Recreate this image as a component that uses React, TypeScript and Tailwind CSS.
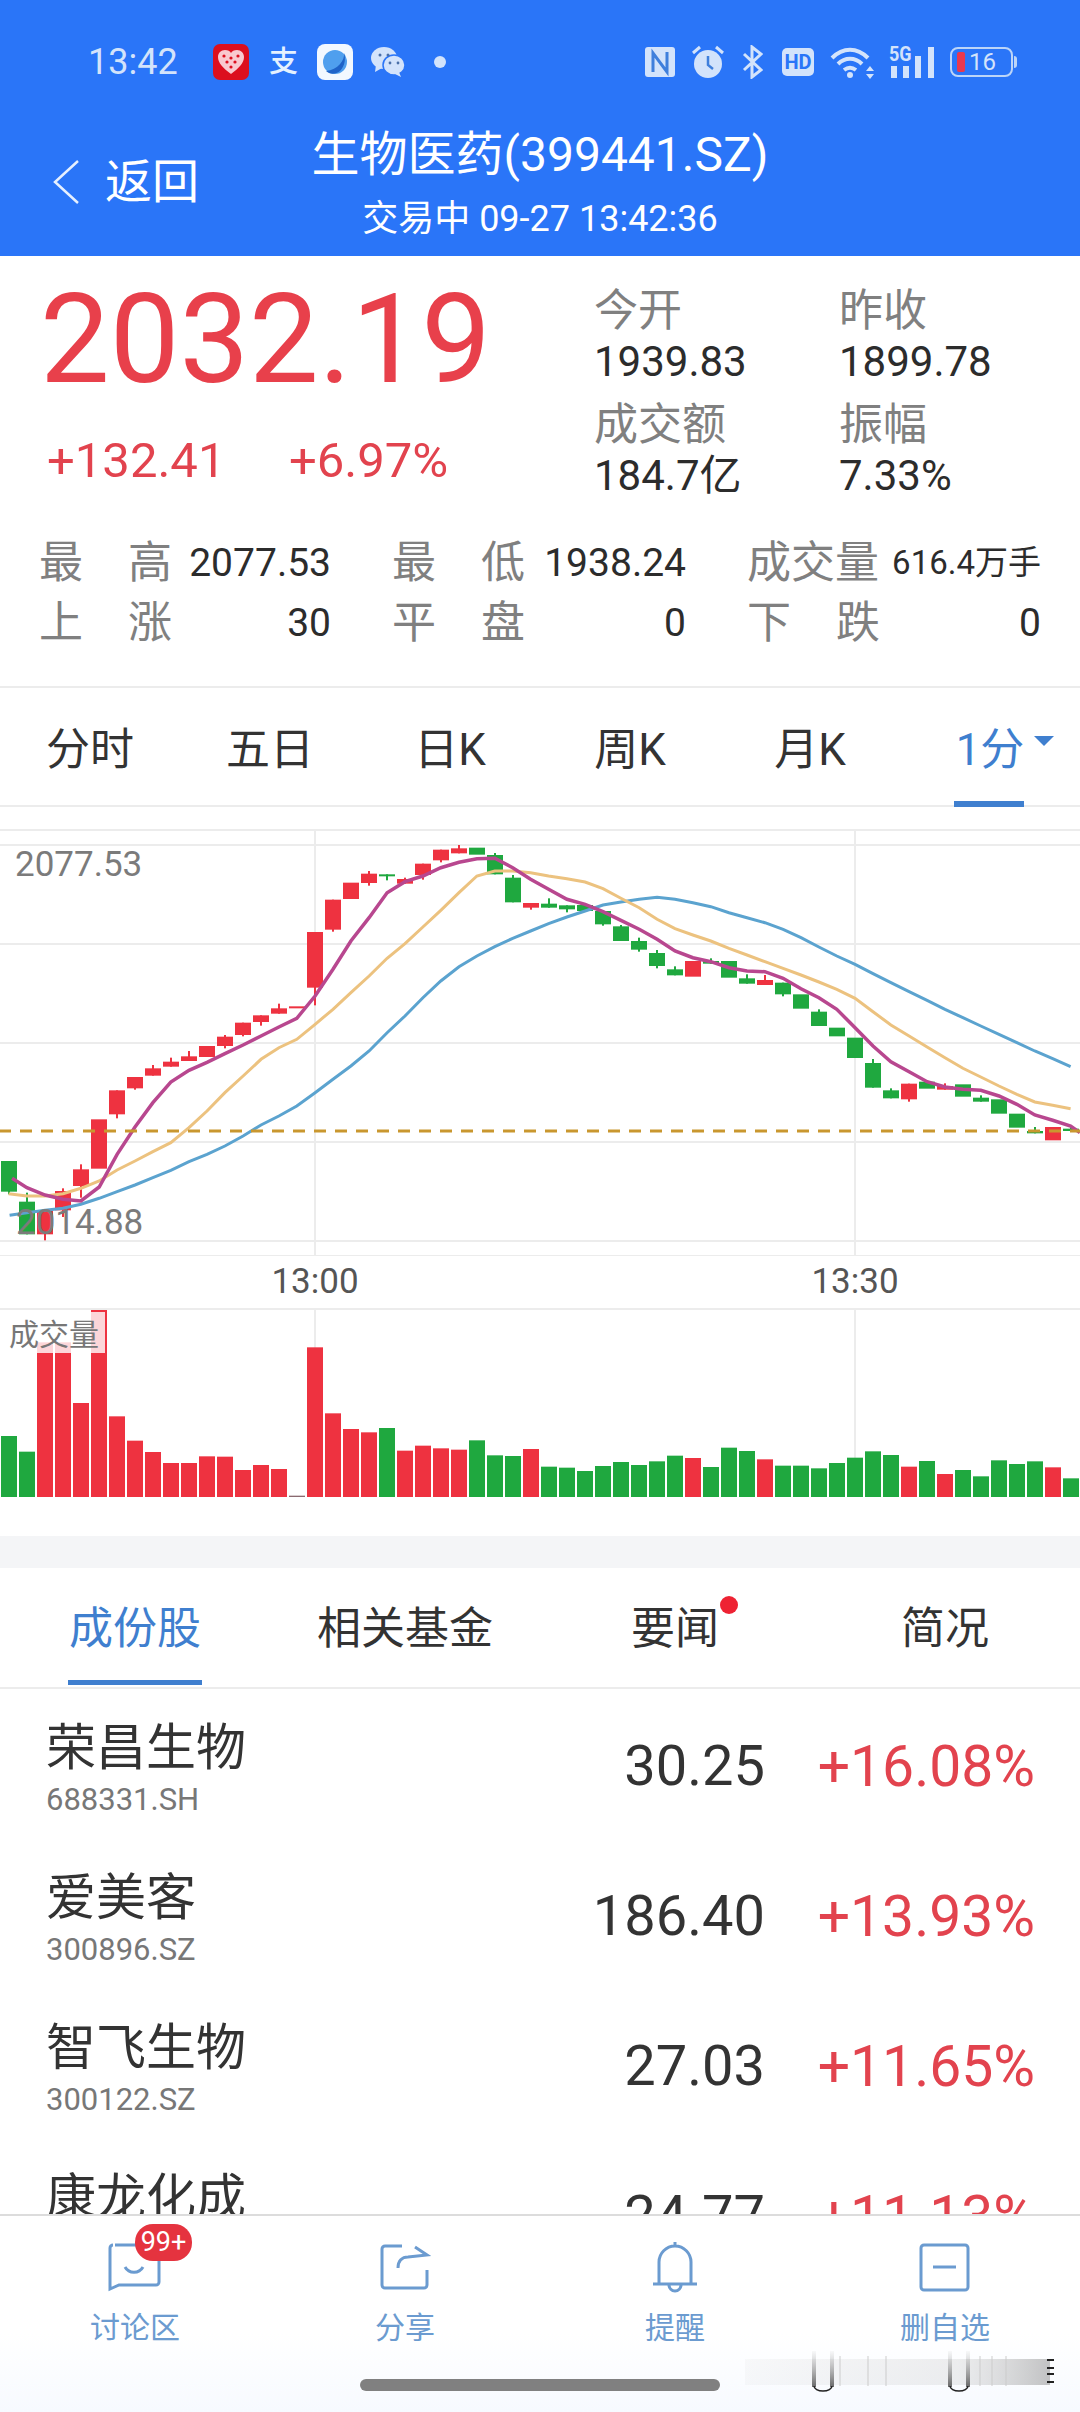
import React from 'react';

const FONT = { fontFamily: 'Roboto, "Noto Sans CJK SC", sans-serif' };

const R = '#ee3240';
const G = '#1fa83f';

// [color, bodyTop, bodyBottom, wickTop, wickBottom] in the chart's 3x grid units
const candles: [string, number, number, number?, number?][] = [
  [G, 1020, 1112, 1020, 1120], [G, 1142, 1240, 1115, 1240], [R, 1170, 1240, 1170, 1258], [R, 1110, 1168, 1102, 1188],
  [R, 1045, 1095, 1030, 1130], [R, 895, 1043], [R, 808, 880, 808, 892], [R, 768, 802, 768, 806],
  [R, 742, 764, 732, 764], [R, 722, 737, 710, 737], [R, 706, 720, 690, 720], [R, 675, 708],
  [R, 647, 675, 642, 682], [R, 605, 642, 605, 646], [R, 583, 603, 583, 614], [R, 562, 578, 548, 578],
  [R, 556, 562], [R, 333, 500, 333, 553], [R, 236, 326, 236, 332], [R, 185, 234],
  [R, 158, 186, 150, 194], [G, 160, 166, 160, 178], [R, 174, 188, 170, 188], [R, 128, 162, 128, 176],
  [R, 86, 118, 86, 124], [R, 82, 97, 72, 97], [G, 80, 101], [G, 102, 160, 96, 160],
  [G, 170, 244, 162, 244], [R, 246, 260, 246, 266],
  [G, 248, 260, 232, 260], [G, 253, 265, 253, 274], [G, 252, 270, 246, 270], [G, 270, 310, 270, 314],
  [G, 316, 360, 312, 360], [G, 360, 386, 350, 392], [G, 396, 435, 387, 442], [G, 445, 463, 436, 463],
  [R, 420, 467], [G, 420, 428, 412, 428], [G, 420, 470], [G, 472, 488, 460, 488],
  [R, 477, 492, 462, 492], [G, 485, 520, 485, 526], [G, 520, 563], [G, 572, 615, 565, 615],
  [G, 620, 646], [G, 650, 711], [G, 726, 800, 714, 800], [G, 808, 832, 802, 832],
  [R, 788, 835, 788, 842], [G, 782, 803], [R, 795, 806, 787, 806], [G, 790, 827],
  [G, 830, 842, 823, 842], [G, 835, 878], [G, 878, 920], [G, 930, 937, 918, 937],
  [R, 918, 958], [G, 923, 930, 918, 930],
];

const left = (pts: number[][]) => pts.map(([x, y]) => `${(x / 2.904).toFixed(1)},${(14 + y / 3).toFixed(1)}`);
const right = (pts: number[][]) => pts.map(([x, y]) => `${(540 + x / 2.904).toFixed(1)},${(14 + y / 3).toFixed(1)}`);

const ma5 = [
  ...left([[35, 1072], [78, 1100], [131, 1122], [183, 1135], [235, 1140], [288, 1098], [340, 1000], [392, 918], [444, 845], [496, 783], [549, 748], [601, 724], [653, 698], [706, 672], [758, 645], [810, 618], [862, 592], [915, 525], [967, 445], [1019, 360], [1072, 290], [1124, 215], [1176, 182], [1228, 165], [1280, 140], [1333, 124], [1385, 113], [1437, 112], [1489, 140], [1541, 175]]),
  ...right([[25, 205], [78, 235], [131, 250], [183, 272], [235, 298], [288, 325], [340, 355], [392, 390], [444, 410], [496, 422], [549, 440], [601, 450], [653, 452], [706, 472], [758, 503], [810, 530], [862, 565], [915, 620], [967, 675], [1019, 722], [1072, 752], [1124, 782], [1176, 798], [1228, 805], [1280, 808], [1333, 825], [1385, 850], [1437, 882], [1489, 898], [1541, 915], [1568, 935]]),
].join(' ');

const ma10 = [
  ...left([[25, 1118], [78, 1125], [131, 1125], [183, 1118], [235, 1102], [288, 1080], [340, 1047], [392, 1020], [444, 992], [496, 965], [549, 920], [601, 870], [653, 815], [706, 765], [758, 715], [810, 680], [862, 655], [915, 610], [967, 565], [1019, 515], [1072, 465], [1124, 412], [1176, 368], [1228, 318], [1280, 268], [1333, 215], [1385, 165], [1437, 150], [1489, 150], [1541, 155]]),
  ...right([[25, 165], [78, 173], [131, 183], [183, 203], [235, 232], [288, 260], [340, 295], [392, 323], [444, 342], [496, 360], [549, 382], [601, 402], [653, 422], [706, 442], [758, 462], [810, 483], [862, 505], [915, 532], [967, 572], [1019, 612], [1072, 645], [1124, 678], [1176, 710], [1228, 742], [1280, 768], [1333, 795], [1385, 820], [1437, 843], [1489, 853], [1541, 863]]),
].join(' ');

const ma20 = [
  ...left([[28, 1183], [78, 1175], [131, 1168], [183, 1162], [235, 1150], [288, 1132], [340, 1112], [392, 1092], [444, 1070], [496, 1048], [549, 1022], [601, 1000], [653, 975], [706, 945], [758, 912], [810, 885], [862, 855], [915, 815], [967, 775], [1019, 735], [1072, 690], [1124, 635], [1176, 585], [1228, 530], [1280, 480], [1333, 437], [1385, 405], [1437, 377], [1489, 352], [1541, 330]]),
  ...right([[25, 308], [78, 288], [131, 270], [183, 252], [235, 243], [288, 235], [340, 229], [392, 235], [444, 245], [496, 257], [549, 275], [601, 290], [653, 305], [706, 325], [758, 350], [810, 378], [862, 405], [915, 430], [967, 458], [1019, 485], [1072, 512], [1124, 538], [1176, 565], [1228, 590], [1280, 615], [1333, 640], [1385, 665], [1437, 690], [1489, 713], [1541, 737]]),
].join(' ');

const volumes: [string, number][] = [
  [G, 441], [G, 488], [R, 160], [R, 160], [R, 342], [R, 57], [R, 382], [R, 455], [R, 489], [R, 522],
  [R, 522], [R, 502], [R, 503], [R, 543], [R, 528], [R, 540], ['#8a6a70', 620], [R, 175], [R, 373], [R, 420],
  [R, 430], [G, 417], [R, 485], [R, 470], [R, 478], [R, 482], [G, 454], [G, 499], [G, 501], [R, 480],
  [G, 533], [G, 536], [G, 546], [G, 531], [G, 519], [G, 528], [G, 517], [G, 500], [R, 507], [G, 534],
  [G, 476], [G, 486], [R, 511], [G, 530], [G, 530], [G, 538], [G, 522], [G, 506], [G, 487], [G, 498],
  [R, 533], [G, 516], [R, 555], [G, 543], [G, 562], [G, 514], [G, 525], [G, 517], [R, 535], [G, 568],
];

const StatusIcons = () => (
  <div className="flex h-[124px] items-center pl-[88px] text-[#d3e3fb]">
    <span className="w-[87px] text-[36px] leading-none">13:42</span>
    <svg className="ml-[38px]" width="36" height="36" viewBox="0 0 36 36">
      <rect width="36" height="36" rx="7" fill="#dc0f1e" />
      <path d="M18 30C10 24 5 19 5 13c0-4 3-7 7-7 3 0 5 1 6 3 1-2 3-3 6-3 4 0 7 3 7 7 0 6-5 11-13 17z" fill="#f9c9cf" />
      <g fill="#dc0f1e">
        <circle cx="11" cy="12" r="1.6" /><circle cx="18" cy="14" r="1.6" /><circle cx="25" cy="12" r="1.6" />
        <circle cx="14" cy="18" r="1.6" /><circle cx="22" cy="18" r="1.6" /><circle cx="18" cy="23" r="1.6" />
      </g>
    </svg>
    <span className="ml-[20px] w-[29px] text-[29px] font-medium leading-none text-[#e4f1ff]">支</span>
    <svg className="ml-[19px]" width="36" height="36" viewBox="0 0 36 36">
      <rect width="36" height="36" rx="8" fill="#f2f8ff" />
      <circle cx="18" cy="18" r="12" fill="#4f9fee" />
      <path d="M27 9c1 7-6 17-18 18 3 3 9 4 14 0 5-5 6-13 4-18z" fill="#1f63c8" />
    </svg>
    <svg className="ml-[18px]" width="34" height="30" viewBox="0 0 34 30">
      <ellipse cx="13" cy="11" rx="13" ry="11" fill="#d3e3fb" />
      <path d="M5 18l-1 7 7-4z" fill="#d3e3fb" />
      <ellipse cx="23" cy="18" rx="11" ry="10" fill="#d3e3fb" stroke="#2a75f8" strokeWidth="1.5" />
      <path d="M28 25l2 5-6-3z" fill="#d3e3fb" />
      <circle cx="9" cy="8" r="1.5" fill="#4a6fa8" /><circle cx="17" cy="8" r="1.5" fill="#4a6fa8" />
      <circle cx="19" cy="16" r="1.4" fill="#4a6fa8" /><circle cx="27" cy="16" r="1.4" fill="#4a6fa8" />
    </svg>
    <span className="ml-[29px] h-[12px] w-[12px] rounded-full bg-[#d3e3fb]" />

    <svg className="ml-[199px]" width="30" height="30" viewBox="0 0 30 30">
      <rect width="30" height="30" rx="3" fill="#d3e3fb" />
      <path d="M8 25V6l14 19V5" fill="none" stroke="#3f7fdc" strokeWidth="3" />
    </svg>
    <svg className="ml-[17px]" width="32" height="34" viewBox="0 0 32 34" fill="#d3e3fb">
      <circle cx="16" cy="19" r="14" />
      <path d="M16 11v9l5 4" fill="none" stroke="#3f7fdc" strokeWidth="2.5" />
      <path d="M1 8l7-6M31 8l-7-6" fill="none" stroke="#d3e3fb" strokeWidth="3" />
    </svg>
    <svg className="ml-[18px]" width="21" height="34" viewBox="0 0 21 34" fill="none" stroke="#d3e3fb" strokeWidth="3">
      <path d="M2 9l17 16-9 7V2l9 7L2 25" />
    </svg>
    <div className="ml-[19px] flex h-[28px] w-[32px] items-center justify-center rounded-[5px] bg-[#d3e3fb] text-[20px] font-bold leading-none text-[#2a75f8]">HD</div>
    <svg className="ml-[16px]" width="44" height="33" viewBox="0 0 44 33" fill="none" stroke="#d3e3fb" strokeWidth="4">
      <path d="M2 12c11-11 25-11 36 0M8 18c7-7 17-7 24 0M14 24c4-3 8-3 12 0" />
      <circle cx="20" cy="29" r="3" fill="#d3e3fb" stroke="none" />
      <path d="M40 20l-4 5h8zM40 33l-4-5h8z" fill="#d3e3fb" stroke="none" />
    </svg>
    <div className="relative ml-[14px] h-[32px] w-[46px]">
      <svg className="absolute left-0 top-0" width="46" height="32" viewBox="0 0 46 32" fill="#d3e3fb">
        <rect x="3" y="20" width="6" height="12" /><rect x="15" y="20" width="6" height="12" />
        <rect x="27" y="10" width="6" height="22" /><rect x="40" y="1" width="6" height="31" />
      </svg>
      <span className="absolute left-[1px] top-[-2px] origin-top-left scale-x-[0.9] text-[20px] font-bold leading-none">5G</span>
    </div>
    <div className="ml-[16px] flex h-[30px] w-[63px] items-center rounded-[8px] border-2 border-[#bcd5f8] pl-[5px]">
      <span className="h-[20px] w-[8px] rounded-[2px] bg-[#e8384f]" />
      <span className="ml-[4px] text-[24px] leading-none">16</span>
    </div>
    <span className="ml-[1px] h-[12px] w-[3px] rounded-r bg-[#bcd5f8]" />
  </div>
);

const TitleBar = () => (
  <div className="grid grid-cols-[1fr_auto_1fr] text-white">
    <div className="flex items-center pb-[8px] pl-[52px] pt-[8px]">
      <svg width="28" height="46" viewBox="0 0 28 46" fill="none" stroke="#e6f0ff" strokeWidth="2.5">
        <path d="M26 2L3 23l23 21" />
      </svg>
      <span className="ml-[25px] text-[47px] leading-none">返回</span>
    </div>
    <div className="flex flex-col items-center">
      <span className="text-[48px] leading-[62px]">生物医药(399441.SZ)</span>
      <span className="mt-[13px] text-[36px] leading-[40px]">交易中 09-27 13:42:36</span>
    </div>
    <div />
  </div>
);

const Stat = ({ label, value }: { label: string; value: string }) => (
  <div>
    <div className="text-[44px] leading-[50px] text-[#808080]">{label}</div>
    <div className="mt-[1px] text-[42px] leading-[50px] text-[#2c2c2c]">{value}</div>
  </div>
);

const Cell = ({ a, b, v, small }: { a: React.ReactNode; b?: string; v: string; small?: boolean }) => (
  <div className="flex items-center">
    <div className="flex w-[133px] justify-between text-[44px] leading-[60px] text-[#808080]">
      <span>{a}</span>
      {b && <span>{b}</span>}
    </div>
    <div className={`flex-1 text-right leading-[60px] text-[#2c2c2c] ${small ? 'text-[33px]' : 'text-[39px]'}`}>{v}</div>
  </div>
);

const Quote = () => (
  <section className="h-[430px] bg-white">
    <div className="flex h-[297px]">
      <div className="w-[594px] pl-[40px] pt-[22px]">
        <div className="text-[124px] leading-[124px] text-[#e8404b]">2032.19</div>
        <div className="mt-[34px] flex pl-[7px] text-[49px] leading-[50px] text-[#e2434e]">
          <span className="w-[242px]">+132.41</span>
          <span>+6.97%</span>
        </div>
      </div>
      <div className="grid w-[486px] grid-cols-[245px_1fr] content-start gap-y-[13px] pt-[30px]">
        <Stat label="今开" value="1939.83" />
        <Stat label="昨收" value="1899.78" />
        <Stat label="成交额" value="184.7亿" />
        <Stat label="振幅" value="7.33%" />
      </div>
    </div>
    <div className="mt-[-20px] grid grid-cols-[292px_294px_294px] gap-x-[61px] pl-[39px]">
      <Cell a="最" b="高" v="2077.53" />
      <Cell a="最" b="低" v="1938.24" />
      <Cell a="成交量" v="616.4万手" small />
      <Cell a="上" b="涨" v="30" />
      <Cell a="平" b="盘" v="0" />
      <Cell a="下" b="跌" v="0" />
    </div>
  </section>
);

const PeriodTabs = () => (
  <nav className="grid h-[121px] grid-cols-6 border-y-2 border-[#ececec] bg-white pt-[6px] text-[44px] text-[#333]">
    {['分时', '五日', '日K', '周K', '月K'].map((t) => (
      <div key={t} className="flex items-center justify-center">{t}</div>
    ))}
    <div className="relative flex items-center justify-center text-[#3f7fcf]">
      1分
      <span className="absolute left-[134px] top-[42px] h-0 w-0 border-x-[10px] border-t-[10px] border-x-transparent border-t-[#3f7fcf]" />
      <span className="absolute bottom-[-2px] left-[54px] h-[6px] w-[70px] bg-[#3f7fcf]" />
    </div>
  </nav>
);

const KLine = () => (
  <div className="relative h-[449px] bg-white">
    <svg className="block" width="1080" height="449" viewBox="0 0 1080 449">
      <g stroke="#ececec" strokeWidth="2">
        {[23, 38, 137, 236, 335, 434, 449].map((y) => (
          <line key={y} x1="0" x2="1080" y1={y} y2={y} />
        ))}
        <line x1="315" x2="315" y1="23" y2="449" />
        <line x1="855" x2="855" y1="23" y2="449" />
      </g>
      {candles.map(([c, t, b, wt, wb], i) => {
        const cx = 9 + 18 * i;
        return (
          <g key={i} fill={c}>
            {wt !== undefined && wb !== undefined && (
              <rect x={cx - 1} y={14 + wt / 3} width="2" height={(wb - wt) / 3} />
            )}
            <rect x={cx - 8} y={14 + t / 3} width="16" height={Math.max((b - t) / 3, 2)} />
          </g>
        );
      })}
      <polyline points={ma20} fill="none" stroke="#5ba3cf" strokeWidth="3" />
      <polyline points={ma10} fill="none" stroke="#ecc27f" strokeWidth="3" />
      <polyline points={ma5} fill="none" stroke="#b8478f" strokeWidth="3.5" />
      <line x1="0" x2="1080" y1="324" y2="324" stroke="#c9972f" strokeWidth="3" strokeDasharray="12 9" strokeDashoffset="1" />
    </svg>
    <span className="absolute left-[15px] top-[38px] text-[35px] leading-[40px] text-[#7b7b7b]">2077.53</span>
    <span className="absolute left-[16px] top-[396px] text-[35px] leading-[40px] text-[#7b7b7b]">2014.88</span>
  </div>
);

const Volume = () => (
  <div className="relative h-[228px] border-t-2 border-[#ececec] bg-white">
    <svg className="block" width="1080" height="226" viewBox="0 0 1080 226">
      <line x1="315" x2="315" y1="0" y2="187" stroke="#ececec" strokeWidth="2" />
      <line x1="855" x2="855" y1="0" y2="187" stroke="#ececec" strokeWidth="2" />
      {volumes.map(([c, t], i) => {
        const y = t / 3 - 21;
        return <rect key={i} x={1 + 18 * i} y={y} width="16" height={187 - y} fill={c} />;
      })}
    </svg>
    <div className="absolute left-0 top-[2px] h-[41px] w-[105px] bg-white/80 pl-[9px] pt-[6px] text-[30px] leading-[34px] text-[#777]">成交量</div>
  </div>
);

const InfoTabs = () => (
  <nav className="grid h-[121px] grid-cols-4 border-b-2 border-[#ececec] bg-white pt-[3px] text-[44px] text-[#333]">
    <div className="relative flex items-center justify-center text-[#3f7fcf]">
      成份股
      <span className="absolute bottom-[2px] left-[68px] h-[5px] w-[134px] bg-[#3f7fcf]" />
    </div>
    <div className="flex items-center justify-center">相关基金</div>
    <div className="relative flex items-center justify-center">
      要闻
      <span className="absolute left-[180px] top-[25px] h-[18px] w-[18px] rounded-full bg-[#ee2233]" />
    </div>
    <div className="flex items-center justify-center">简况</div>
  </nav>
);

const stocks = [
  { name: '荣昌生物', code: '688331.SH', price: '30.25', pct: '+16.08%' },
  { name: '爱美客', code: '300896.SZ', price: '186.40', pct: '+13.93%' },
  { name: '智飞生物', code: '300122.SZ', price: '27.03', pct: '+11.65%' },
  { name: '康龙化成', code: '', price: '24.77', pct: '+11.13%' },
];

const StockRow = ({ s }: { s: (typeof stocks)[number] }) => (
  <div className="flex h-[150px] shrink-0 items-center pl-[46px] pr-[45px]">
    <div className="flex-1 pt-[3px]">
      <div className="text-[50px] leading-[60px] text-[#333]">{s.name}</div>
      <div className="mt-[4px] min-h-[36px] text-[31px] leading-[36px] text-[#777]">{s.code}</div>
    </div>
    <div className="text-[56px] leading-none text-[#333]">{s.price}</div>
    <div className="w-[270px] text-right text-[57px] leading-none text-[#e2434e]">{s.pct}</div>
  </div>
);

const ACTIONS = [
  {
    label: '讨论区',
    icon: (
      <>
        <path d="M10 7h41a3 3 0 013 3v34a3 3 0 01-3 3H14l-9 4V10a3 3 0 013-3" />
        <path d="M20 29c4 7 14 7 18 0" />
      </>
    ),
    badge: true,
  },
  {
    label: '分享',
    icon: (
      <>
        <path d="M27 8H10a3 3 0 00-3 3v36a3 3 0 003 3h39a3 3 0 003-3V32" />
        <path d="M23 30c0-7 4-11 10-11l19-2L40 9" />
      </>
    ),
  },
  {
    label: '提醒',
    icon: (
      <>
        <path d="M30 4v4M14 46V24a16 16 0 0132 0v22M8 46h44" />
        <path d="M24 47a6 6 0 0012 0" />
      </>
    ),
  },
  {
    label: '删自选',
    icon: (
      <>
        <rect x="6" y="7" width="47" height="45" rx="3" />
        <path d="M18 29h23" />
      </>
    ),
  },
];

const BottomBar = () => (
  <footer className="relative h-[198px] shrink-0 border-t-2 border-[#dcdcdc] bg-gradient-to-b from-white from-60% to-[#f7faff]">
    <div className="grid grid-cols-4">
      {ACTIONS.map((a) => (
        <div key={a.label} className="relative flex flex-col items-center pt-[22px]">
          <svg width="60" height="60" viewBox="0 0 60 60" fill="none" stroke="#6b9bd0" strokeWidth="3">
            {a.icon}
          </svg>
          <span className="mt-[12px] text-[30px] leading-[36px] text-[#6b9bd0]">{a.label}</span>
          {a.badge && (
            <span className="absolute left-[135px] top-[8px] flex h-[37px] w-[57px] items-center justify-center rounded-[18px] bg-[#e5333f] text-[27px] leading-none text-white">99+</span>
          )}
        </div>
      ))}
    </div>
    <span className="absolute bottom-[21px] left-[360px] h-[12px] w-[360px] rounded-full bg-[#808080]" />
    {/* smudged ghost strip beside the home bar */}
    <svg className="absolute bottom-[20px] left-[740px]" width="316" height="42" viewBox="0 0 316 42" fill="none">
      <defs>
        <linearGradient id="fade" x1="0" y1="0" x2="0" y2="1">
          <stop offset="0" stopColor="#888" stopOpacity="0.05" />
          <stop offset="1" stopColor="#444" stopOpacity="0.8" />
        </linearGradient>
        <linearGradient id="smear" x1="0" y1="0" x2="1" y2="0">
          <stop offset="0" stopColor="#bbb" stopOpacity="0.08" />
          <stop offset="0.7" stopColor="#bbb" stopOpacity="0.25" />
          <stop offset="1" stopColor="#888" stopOpacity="0.5" />
        </linearGradient>
      </defs>
      <rect x="5" y="9" width="305" height="26" fill="url(#smear)" />
      <rect x="72" y="1" width="4" height="36" fill="url(#fade)" />
      <rect x="90" y="1" width="4" height="36" fill="url(#fade)" />
      <rect x="208" y="1" width="4" height="36" fill="url(#fade)" />
      <rect x="226" y="1" width="4" height="36" fill="url(#fade)" />
      <path d="M74 36a9 5 0 0018 0M210 36a9 5 0 0018 0" stroke="#222" strokeWidth="1.5" />
      <path d="M100 6v30M128 6v30M146 6v30M240 6v30M252 6v30M266 6v30" stroke="#ccc" strokeWidth="2" opacity="0.5" />
      <path d="M307 10h7M307 18h7M307 24h7M307 32h7" stroke="#222" strokeWidth="2" />
    </svg>
  </footer>
);

export default function App() {
  return (
    <div className="flex h-[2412px] w-[1080px] flex-col overflow-hidden bg-white" style={FONT}>
      <header className="h-[256px] shrink-0 bg-[#2a75f8]">
        <StatusIcons />
        <TitleBar />
      </header>
      <Quote />
      <PeriodTabs />
      <KLine />
      <div className="grid h-[52px] grid-cols-[225px_180px_360px_180px_1fr] items-center bg-white text-[35px] text-[#555]">
        <span />
        <span className="text-center">13:00</span>
        <span />
        <span className="text-center">13:30</span>
      </div>
      <Volume />
      <div className="h-[32px] shrink-0 bg-[#f4f5f7]" />
      <InfoTabs />
      <div className="flex min-h-0 flex-1 flex-col overflow-hidden bg-white pt-[2px]">
        {stocks.map((s) => (
          <StockRow key={s.name} s={s} />
        ))}
      </div>
      <BottomBar />
    </div>
  );
}
